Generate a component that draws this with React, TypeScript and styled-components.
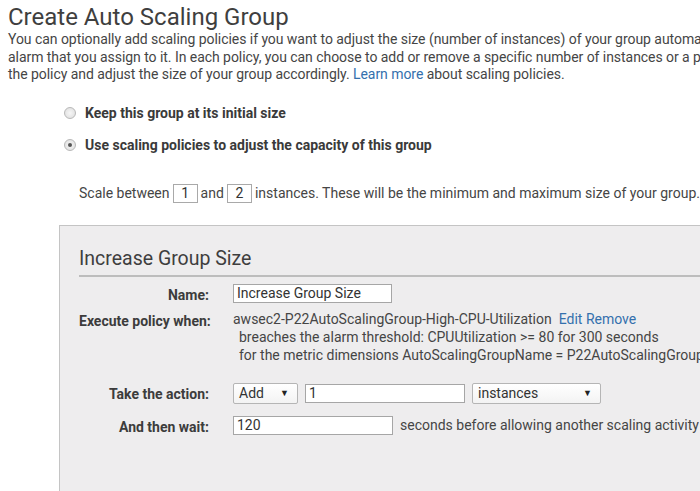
import React from "react";
import styled, { createGlobalStyle } from "styled-components";

const GlobalStyle = createGlobalStyle`
  html, body {
    margin: 0;
    padding: 0;
    background: #ffffff;
    overflow: hidden;
  }
  body {
    font-family: Roboto, "Liberation Sans", Arial, sans-serif;
    color: #444444;
  }
`;

const Page = styled.div`
  width: 700px;
  height: 491px;
  overflow: hidden;
  padding: 4px 0 0 8px;
  box-sizing: border-box;
`;

const Title = styled.h1`
  margin: 0;
  font-size: 24px;
  font-weight: 400;
  line-height: 26px;
  color: #3f3f3f;
  white-space: nowrap;
`;

const Intro = styled.div`
  font-size: 14px;
  line-height: 17.5px;
  color: #454545;
  white-space: nowrap;
  margin-top: 1px;
  letter-spacing: -0.05px;
`;

const Link = styled.a`
  color: #3470ad;
  text-decoration: none;
  cursor: pointer;
`;

const Options = styled.div`
  display: flex;
  flex-direction: column;
  gap: 14px;
  margin: 20px 0 0 56px;
`;

const RadioRow = styled.label`
  display: flex;
  align-items: center;
  gap: 9px;
  font-size: 14px;
  font-weight: 700;
  color: #3a3a3a;
  line-height: 18px;
`;

const Radio = styled.span<{ $checked?: boolean }>`
  width: 10px;
  height: 10px;
  border-radius: 50%;
  border: 1px solid #b8b8b8;
  background: radial-gradient(circle, #f6f6f6 0%, #dcdcdc 100%);
  position: relative;
  flex: none;

  &::after {
    content: "";
    display: ${({ $checked }) => ($checked ? "block" : "none")};
    position: absolute;
    left: 3px;
    top: 3px;
    width: 4px;
    height: 4px;
    border-radius: 50%;
    background: #555;
  }
`;

const ScaleRow = styled.div`
  display: flex;
  align-items: center;
  margin: 30px 0 0 71px;
  font-size: 14px;
  color: #454545;
  white-space: nowrap;
`;

const SmallBox = styled.span`
  display: inline-block;
  width: 30px;
  height: 17px;
  border: 1px solid #a9a9a9;
  text-align: center;
  line-height: 17px;
  margin: 0 3px;
  color: #333;
`;

const Panel = styled.div`
  margin: 22px 0 0 51px;
  width: 700px;
  height: 300px;
  background: #eeedee;
  border: 1px solid #c4c4c4;
  border-right: none;
  padding: 21px 0 0 19px;
  box-sizing: border-box;
`;

const PanelTitle = styled.h2`
  margin: 0;
  font-size: 19.5px;
  font-weight: 400;
  color: #3e3e3e;
  line-height: 24px;
  padding-bottom: 4px;
  border-bottom: 2px solid #bdbdbd;
`;

const Form = styled.div`
  display: grid;
  grid-template-columns: 130px 1fr;
  column-gap: 24px;
  margin-top: 7px;
  font-size: 14px;
`;

const Label = styled.div<{ $gap?: number }>`
  text-align: right;
  font-weight: 700;
  color: #3c3c3c;
  line-height: 18px;
  padding-top: 2px;
  white-space: nowrap;
  margin-bottom: ${({ $gap }) => $gap ?? 0}px;
`;

const Field = styled.div<{ $gap?: number }>`
  display: flex;
  flex-direction: column;
  margin-bottom: ${({ $gap }) => $gap ?? 0}px;
  white-space: nowrap;
  color: #454545;
`;

const Line = styled.div<{ $indent?: boolean }>`
  line-height: 18px;
  padding-left: ${({ $indent }) => ($indent ? 6 : 0)}px;
`;

const Controls = styled.div`
  display: flex;
  align-items: center;
  gap: 7px;
`;

const TextBox = styled.div<{ $w: number }>`
  width: ${({ $w }) => $w}px;
  height: 19px;
  box-sizing: border-box;
  border: 1px solid #a6a6a6;
  background: #fff;
  padding: 0 3px;
  line-height: 17px;
  color: #333;
`;

const Select = styled.div<{ $w: number }>`
  width: ${({ $w }) => $w}px;
  height: 21px;
  box-sizing: border-box;
  border: 1px solid #b5b5b5;
  border-radius: 2px;
  background: linear-gradient(#ffffff, #f3f3f3);
  padding: 0 8px 0 5px;
  display: flex;
  align-items: center;
  justify-content: space-between;
  color: #333;
`;

const Caret = styled.span`
  font-size: 9px;
  color: #222;
`;

const Suffix = styled.span`
  color: #454545;
`;

export default function App() {
  return (
    <>
      <GlobalStyle />
      <Page>
        <Title>Create Auto Scaling Group</Title>
        <Intro>
          <div>
            You can optionally add scaling policies if you want to adjust the size (number of
            instances) of your group automatically
          </div>
          <div>
            alarm that you assign to it. In each policy, you can choose to add or remove a specific
            number of instances or a percentage
          </div>
          <div>
            the policy and adjust the size of your group accordingly. <Link>Learn more</Link> about
            scaling policies.
          </div>
        </Intro>

        <Options>
          <RadioRow>
            <Radio />
            Keep this group at its initial size
          </RadioRow>
          <RadioRow>
            <Radio $checked />
            Use scaling policies to adjust the capacity of this group
          </RadioRow>
        </Options>

        <ScaleRow>
          Scale between <SmallBox>1</SmallBox>and<SmallBox>2</SmallBox> instances. These will be
          the minimum and maximum size of your group.
        </ScaleRow>

        <Panel>
          <PanelTitle>Increase Group Size</PanelTitle>
          <Form>
            <Label $gap={6}>Name:</Label>
            <Field $gap={6}>
              <TextBox $w={159}>Increase Group Size</TextBox>
            </Field>

            <Label $gap={19}>Execute policy when:</Label>
            <Field $gap={19}>
              <Line>
                awsec2-P22AutoScalingGroup-High-CPU-Utilization&nbsp;&nbsp;
                <Link>Edit</Link> <Link>Remove</Link>
              </Line>
              <Line $indent>breaches the alarm threshold: CPUUtilization &gt;= 80 for 300 seconds</Line>
              <Line $indent>for the metric dimensions AutoScalingGroupName = P22AutoScalingGroup</Line>
            </Field>

            <Label $gap={12}>Take the action:</Label>
            <Field $gap={12}>
              <Controls>
                <Select $w={65}>
                  Add <Caret>▼</Caret>
                </Select>
                <TextBox $w={160}>1</TextBox>
                <Select $w={129}>
                  instances <Caret>▼</Caret>
                </Select>
              </Controls>
            </Field>

            <Label>And then wait:</Label>
            <Field>
              <Controls>
                <TextBox $w={160}>120</TextBox>
                <Suffix>seconds before allowing another scaling activity</Suffix>
              </Controls>
            </Field>
          </Form>
        </Panel>
      </Page>
    </>
  );
}
